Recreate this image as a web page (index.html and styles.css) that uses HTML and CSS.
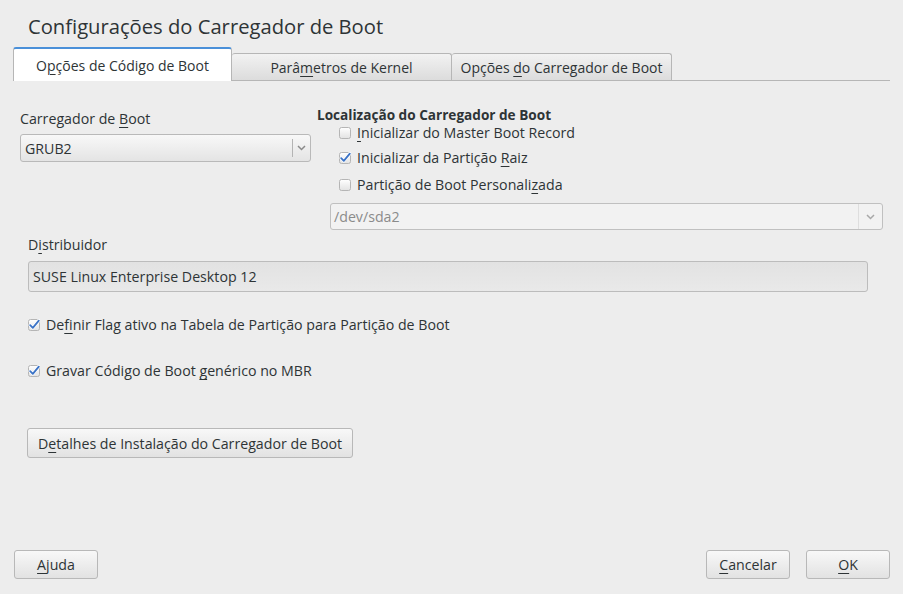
FILE: index.html
```html
<!DOCTYPE html>
<html lang="pt">
<head>
<meta charset="utf-8">
<title>Configurações do Carregador de Boot</title>
<link rel="stylesheet" href="styles.css">
</head>
<body>
<div class="dialog">
  <h1 class="title">Configurações do Carregador de Boot</h1>

  <div class="tabs">
    <div class="tab active"><span>O<u>p</u>ções de Código de Boot</span></div>
    <div class="tab"><span>Parâ<u>m</u>etros de Kernel</span></div>
    <div class="tab"><span>Opções <u>d</u>o Carregador de Boot</span></div>
  </div>

  <div class="content">
    <div class="top-row">
      <div class="loader-col">
        <div class="label">Carregador de <u>B</u>oot</div>
        <div class="combo loader-combo">
          <span class="combo-text">GRUB2</span>
          <span class="combo-arrow">
            <svg width="9" height="6" viewBox="0 0 9 6"><path d="M1 1 L4.5 4.5 L8 1" fill="none" stroke="#8a8a8a" stroke-width="1.5"/></svg>
          </span>
        </div>
      </div>

      <div class="location-col">
        <div class="heading">Localização do Carregador de Boot</div>
        <div class="checklist">
          <div class="check-row r1">
            <svg class="cb" width="12" height="12" viewBox="0 0 12 12"><defs><linearGradient id="g" x1="0" y1="0" x2="0" y2="1"><stop offset="0" stop-color="#fff"/><stop offset="1" stop-color="#e2e2e2"/></linearGradient></defs><rect x="0.5" y="0.5" width="11" height="11" rx="2" fill="url(#g)" stroke="#b5b5b5"/></svg>
            <span><u>I</u>nicializar do Master Boot Record</span>
          </div>
          <div class="check-row r2">
            <svg class="cb" width="12" height="12" viewBox="0 0 12 12"><rect x="0.5" y="0.5" width="11" height="11" rx="2" fill="url(#g)" stroke="#b5b5b5"/><path d="M2.2 6.2 L4.8 8.8 L10.8 1.6" fill="none" stroke="#fff" stroke-width="3.2" stroke-linecap="round" stroke-linejoin="round"/><path d="M2.2 6.2 L4.8 8.8 L10.8 1.6" fill="none" stroke="#3b73c6" stroke-width="1.8" stroke-linecap="round" stroke-linejoin="round"/></svg>
            <span>Inicializar da Partição <u>R</u>aiz</span>
          </div>
          <div class="check-row r3">
            <svg class="cb" width="12" height="12" viewBox="0 0 12 12"><rect x="0.5" y="0.5" width="11" height="11" rx="2" fill="url(#g)" stroke="#b5b5b5"/></svg>
            <span>Partição de Boot Personali<u>z</u>ada</span>
          </div>
        </div>
        <div class="combo disabled part-combo">
          <span class="combo-text">/dev/sda2</span>
          <span class="combo-arrow">
            <svg width="9" height="6" viewBox="0 0 9 6"><path d="M1 1 L4.5 4.5 L8 1" fill="none" stroke="#a8a8a8" stroke-width="1.5"/></svg>
          </span>
        </div>
      </div>
    </div>

    <div class="label distrib-label">D<u>i</u>stribuidor</div>
    <div class="entry">SUSE Linux Enterprise Desktop 12</div>

    <div class="check-row wide first">
      <svg class="cb" width="12" height="12" viewBox="0 0 12 12"><rect x="0.5" y="0.5" width="11" height="11" rx="2" fill="url(#g)" stroke="#b5b5b5"/><path d="M2.2 6.2 L4.8 8.8 L10.8 1.6" fill="none" stroke="#fff" stroke-width="3.2" stroke-linecap="round" stroke-linejoin="round"/><path d="M2.2 6.2 L4.8 8.8 L10.8 1.6" fill="none" stroke="#3b73c6" stroke-width="1.8" stroke-linecap="round" stroke-linejoin="round"/></svg>
      <span>De<u>f</u>inir Flag ativo na Tabela de Partição para Partição de Boot</span>
    </div>
    <div class="check-row wide second">
      <svg class="cb" width="12" height="12" viewBox="0 0 12 12"><rect x="0.5" y="0.5" width="11" height="11" rx="2" fill="url(#g)" stroke="#b5b5b5"/><path d="M2.2 6.2 L4.8 8.8 L10.8 1.6" fill="none" stroke="#fff" stroke-width="3.2" stroke-linecap="round" stroke-linejoin="round"/><path d="M2.2 6.2 L4.8 8.8 L10.8 1.6" fill="none" stroke="#3b73c6" stroke-width="1.8" stroke-linecap="round" stroke-linejoin="round"/></svg>
      <span>Gravar Código de Boot <u>g</u>enérico no MBR</span>
    </div>

    <button class="btn details">D<u>e</u>talhes de Instalação do Carregador de Boot</button>
  </div>

  <div class="footer">
    <button class="btn small"><u>A</u>juda</button>
    <div class="spacer"></div>
    <button class="btn small"><u>C</u>ancelar</button>
    <button class="btn small"><u>O</u>K</button>
  </div>
</div>
</body>
</html>
```

FILE: styles.css
```css
html, body {
  margin: 0;
  padding: 0;
  background: #ededed;
}

body {
  font-family: "Open Sans", "Noto Sans", sans-serif;
  font-size: 14.2px;
  color: #2e3436;
}

u {
  text-decoration: underline;
  text-underline-offset: 3px;
  text-decoration-thickness: 1px;
}

.dialog {
  height: 594px;
  display: flex;
  flex-direction: column;
  box-sizing: border-box;
}

.title {
  margin: 0;
  padding: 12px 0 0 28px;
  font-size: 20.2px;
  font-weight: normal;
  line-height: 28px;
  color: #2e3436;
}

.tabs {
  display: flex;
  align-items: flex-end;
  margin: 7px 13px 0 13px;
  border-bottom: 1px solid #b6b6b6;
  height: 33px;
}

.tab {
  box-sizing: border-box;
  width: 220px;
  height: 27px;
  display: flex;
  align-items: center;
  justify-content: center;
  border: 1px solid #b6b6b6;
  border-bottom: none;
  border-left: none;
  border-radius: 3px 3px 0 0;
  background: linear-gradient(#f2f2f2, #dcdcdc);
  padding-top: 1px;
  font-size: 14px;
}

.tab.active {
  width: 219px;
  height: 34px;
  margin-bottom: -1px;
  background: #ffffff;
  border: 1px solid #b6b6b6;
  border-top: 2px solid #4a90d9;
  border-bottom: none;
  padding-top: 0;
}

.content {
  display: flex;
  flex-direction: column;
  align-items: flex-start;
}

.top-row {
  display: flex;
  margin-top: 26px;
}

.loader-col {
  margin-left: 20px;
  width: 291px;
  padding-top: 3px;
}

.label {
  line-height: 18px;
}

.combo {
  box-sizing: border-box;
  display: flex;
  align-items: center;
  border: 1px solid #b9b9b9;
  border-radius: 3px;
  background: linear-gradient(#f8f8f8, #e4e4e4);
}

.loader-combo {
  margin-top: 6px;
  height: 28px;
  width: 291px;
}

.combo-text {
  flex: 1;
  padding-left: 4px;
}

.combo-arrow {
  display: flex;
  align-items: center;
  justify-content: center;
  width: 16px;
  height: 18px;
  border-left: 1px solid #b4b4b4;
  margin-right: 1px;
}

.location-col {
  margin-left: 6px;
}

.heading {
  font-weight: bold;
  font-size: 13.6px;
  line-height: 16px;
}

.checklist {
  margin-left: 22px;
}

.check-row {
  display: flex;
  align-items: center;
  height: 20px;
  line-height: 20px;
}

.check-row.r1 {
  margin-top: 0;
}

.check-row.r2 {
  margin-top: 5px;
}

.check-row.r3 {
  margin-top: 7px;
}

.check-row .cb {
  margin-right: 6px;
  flex: none;
}

.part-combo {
  margin-top: 8px;
  margin-left: 13px;
  width: 553px;
  height: 27px;
  background: #f2f2f2;
  border-color: #c0c0c0;
  color: #8b8b8b;
}

.part-combo .combo-text {
  padding-left: 3px;
}

.part-combo .combo-arrow {
  border-left: 1px solid #dedede;
  width: 22px;
  height: 25px;
}

.distrib-label {
  margin-top: 6px;
  margin-left: 28px;
}

.entry {
  box-sizing: border-box;
  margin-top: 7px;
  margin-left: 28px;
  width: 840px;
  height: 31px;
  line-height: 29px;
  padding-left: 4px;
  border: 1px solid #bcbcbc;
  border-radius: 3px;
  background: linear-gradient(#e2e2e2, #e9e9e9);
}

.check-row.wide {
  margin-left: 28px;
  height: 20px;
}

.check-row.wide.first {
  margin-top: 23px;
}

.check-row.wide.second {
  margin-top: 26px;
}

.btn {
  box-sizing: border-box;
  font-family: inherit;
  font-size: inherit;
  color: #2e3436;
  border: 1px solid #b8b8b8;
  border-radius: 3px;
  background: linear-gradient(#f8f8f8, #e2e2e2);
  padding: 0;
  margin: 0;
}

.details {
  margin-top: 47px;
  margin-left: 27px;
  width: 326px;
  height: 30px;
}

.footer {
  margin-top: auto;
  display: flex;
  padding: 0 13px 15px 14px;
  gap: 16px;
}

.spacer {
  flex: 1;
}

.btn.small {
  width: 84px;
  height: 29px;
}
```
